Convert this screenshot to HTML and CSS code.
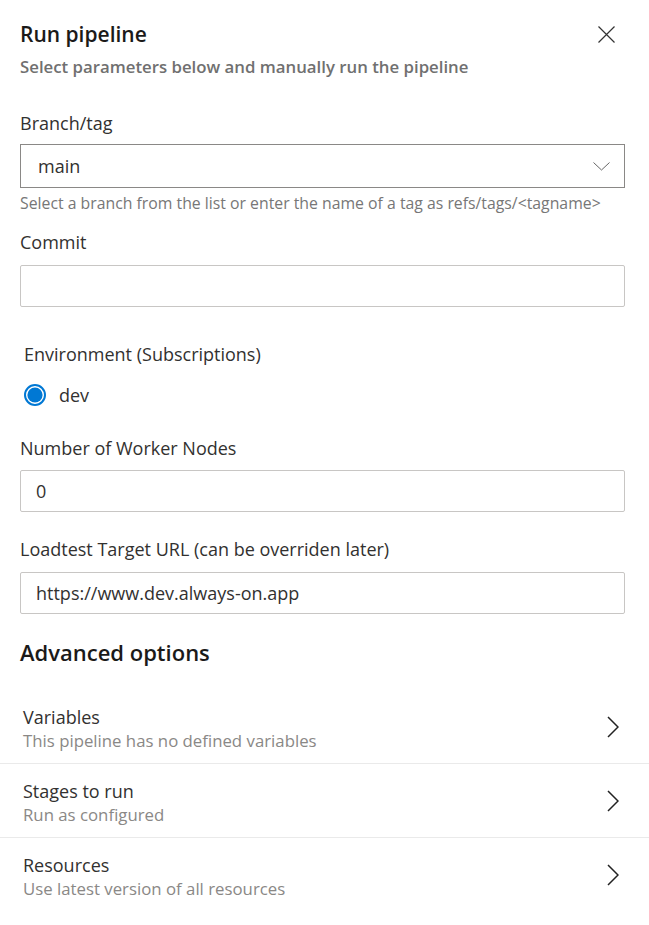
FILE: index.html
```html
<!DOCTYPE html>
<html>
<head>
<meta charset="utf-8">
<link rel="stylesheet" href="styles.css">
</head>
<body>
<div class="panel">
  <div class="header">
    <div class="title">Run pipeline</div>
    <button class="close" aria-label="Close">
      <svg width="17" height="17" viewBox="0 0 17 17"><path d="M0.5 0.5 L16.5 16.5 M16.5 0.5 L0.5 16.5" stroke="#333" stroke-width="1.2" fill="none"/></svg>
    </button>
  </div>
  <div class="subtitle">Select parameters below and manually run the pipeline</div>

  <div class="field first">
    <div class="label">Branch/tag</div>
    <div class="dropdown">
      <span class="value">main</span>
      <svg class="chev-down" width="17" height="9" viewBox="0 0 17 9"><path d="M0.5 0.5 L8.5 8 L16.5 0.5" stroke="#666" stroke-width="1" fill="none"/></svg>
    </div>
    <div class="helper">Select a branch from the list or enter the name of a tag as refs/tags/&lt;tagname&gt;</div>
  </div>

  <div class="field commit">
    <div class="label">Commit</div>
    <div class="input"></div>
  </div>

  <div class="field env">
    <div class="label indent">Environment (Subscriptions)</div>
    <div class="radio-row">
      <svg class="radio" width="22" height="22" viewBox="0 0 22 22"><circle cx="11" cy="11" r="10" fill="none" stroke="#0078d4" stroke-width="2"/><circle cx="11" cy="11" r="7.6" fill="#0078d4"/></svg>
      <span class="radio-label">dev</span>
    </div>
  </div>

  <div class="field workers">
    <div class="label">Number of Worker Nodes</div>
    <div class="input"><span class="value">0</span></div>
  </div>

  <div class="field url">
    <div class="label">Loadtest Target URL (can be overriden later)</div>
    <div class="input"><span class="value">https://www.dev.always-on.app</span></div>
  </div>

  <div class="section-title">Advanced options</div>
</div>

<div class="options">
  <div class="option">
    <div class="option-text">
      <div class="option-title">Variables</div>
      <div class="option-sub">This pipeline has no defined variables</div>
    </div>
    <svg class="chev" width="12" height="22" viewBox="0 0 12 22"><path d="M1 1 L11 11 L1 21" stroke="#222" stroke-width="1.5" fill="none"/></svg>
  </div>
  <div class="option">
    <div class="option-text">
      <div class="option-title">Stages to run</div>
      <div class="option-sub">Run as configured</div>
    </div>
    <svg class="chev" width="12" height="22" viewBox="0 0 12 22"><path d="M1 1 L11 11 L1 21" stroke="#222" stroke-width="1.5" fill="none"/></svg>
  </div>
  <div class="option last">
    <div class="option-text">
      <div class="option-title">Resources</div>
      <div class="option-sub">Use latest version of all resources</div>
    </div>
    <svg class="chev" width="12" height="22" viewBox="0 0 12 22"><path d="M1 1 L11 11 L1 21" stroke="#222" stroke-width="1.5" fill="none"/></svg>
  </div>
</div>
</body>
</html>
```

FILE: styles.css
```css
* { box-sizing: border-box; }
html, body {
  margin: 0;
  padding: 0;
  background: #ffffff;
}
body {
  font-family: "Open Sans", "Noto Sans", sans-serif;
  color: #323130;
  width: 649px;
  height: 925px;
  overflow: hidden;
}
.panel {
  padding: 20px 24px 0 20px;
}
.header {
  display: flex;
  justify-content: space-between;
  align-items: center;
  height: 28px;
}
.title {
  font-size: 21px;
  font-weight: 600;
  line-height: 28px;
  color: #1b1a19;
}
.close {
  border: 0;
  background: transparent;
  padding: 0;
  margin-right: 10px;
  width: 17px;
  height: 17px;
  display: flex;
}
.subtitle {
  margin-top: 9px;
  font-size: 16.8px;
  line-height: 20px;
  font-weight: 600;
  color: #707070;
  white-space: nowrap;
}
.field { display: flex; flex-direction: column; }
.field.first { margin-top: 36px; }
.label {
  font-size: 18px;
  line-height: 20px;
  color: #323130;
  white-space: nowrap;
}
.label.indent { padding-left: 4px; }
.dropdown {
  margin-top: 11px;
  height: 44px;
  border: 1px solid #8a8886;
  display: flex;
  align-items: center;
  justify-content: space-between;
  padding: 0 14px 0 17px;
}
.value {
  font-size: 18px;
  line-height: 24px;
  color: #323130;
}
.helper {
  margin-top: 6px;
  font-size: 15.8px;
  line-height: 18px;
  color: #777777;
  white-space: nowrap;
}
.commit { margin-top: 20px; }
.input {
  margin-top: 13px;
  height: 42px;
  border: 1px solid #c8c6c4;
  border-radius: 2px;
  display: flex;
  align-items: center;
  padding: 0 15px;
}
.env { margin-top: 37px; }
.radio-row {
  margin-top: 20px;
  display: flex;
  align-items: center;
  height: 22px;
  padding-left: 4px;
}
.radio-label {
  margin-left: 13px;
  font-size: 18px;
  line-height: 24px;
  color: #323130;
}
.workers { margin-top: 32px; }
.workers .input { margin-top: 12px; }
.url { margin-top: 27px; }
.url .input { margin-top: 13px; }
.section-title {
  margin-top: 24px;
  font-size: 22px;
  font-weight: 600;
  line-height: 28px;
  color: #1b1a19;
}
.options {
  margin-top: 24px;
}
.option {
  display: flex;
  align-items: center;
  justify-content: space-between;
  height: 74px;
  padding: 0 30px 0 23px;
  border-bottom: 1px solid #eaeaea;
}
.option.last { border-bottom: 0; }
.option-text { display: flex; flex-direction: column; padding-top: 4px; }
.option-title {
  font-size: 18px;
  line-height: 24px;
  color: #323130;
  white-space: nowrap;
}
.option-sub {
  font-size: 16.8px;
  line-height: 24px;
  color: #8a8886;
  white-space: nowrap;
}
.chev { display: block; }
```
